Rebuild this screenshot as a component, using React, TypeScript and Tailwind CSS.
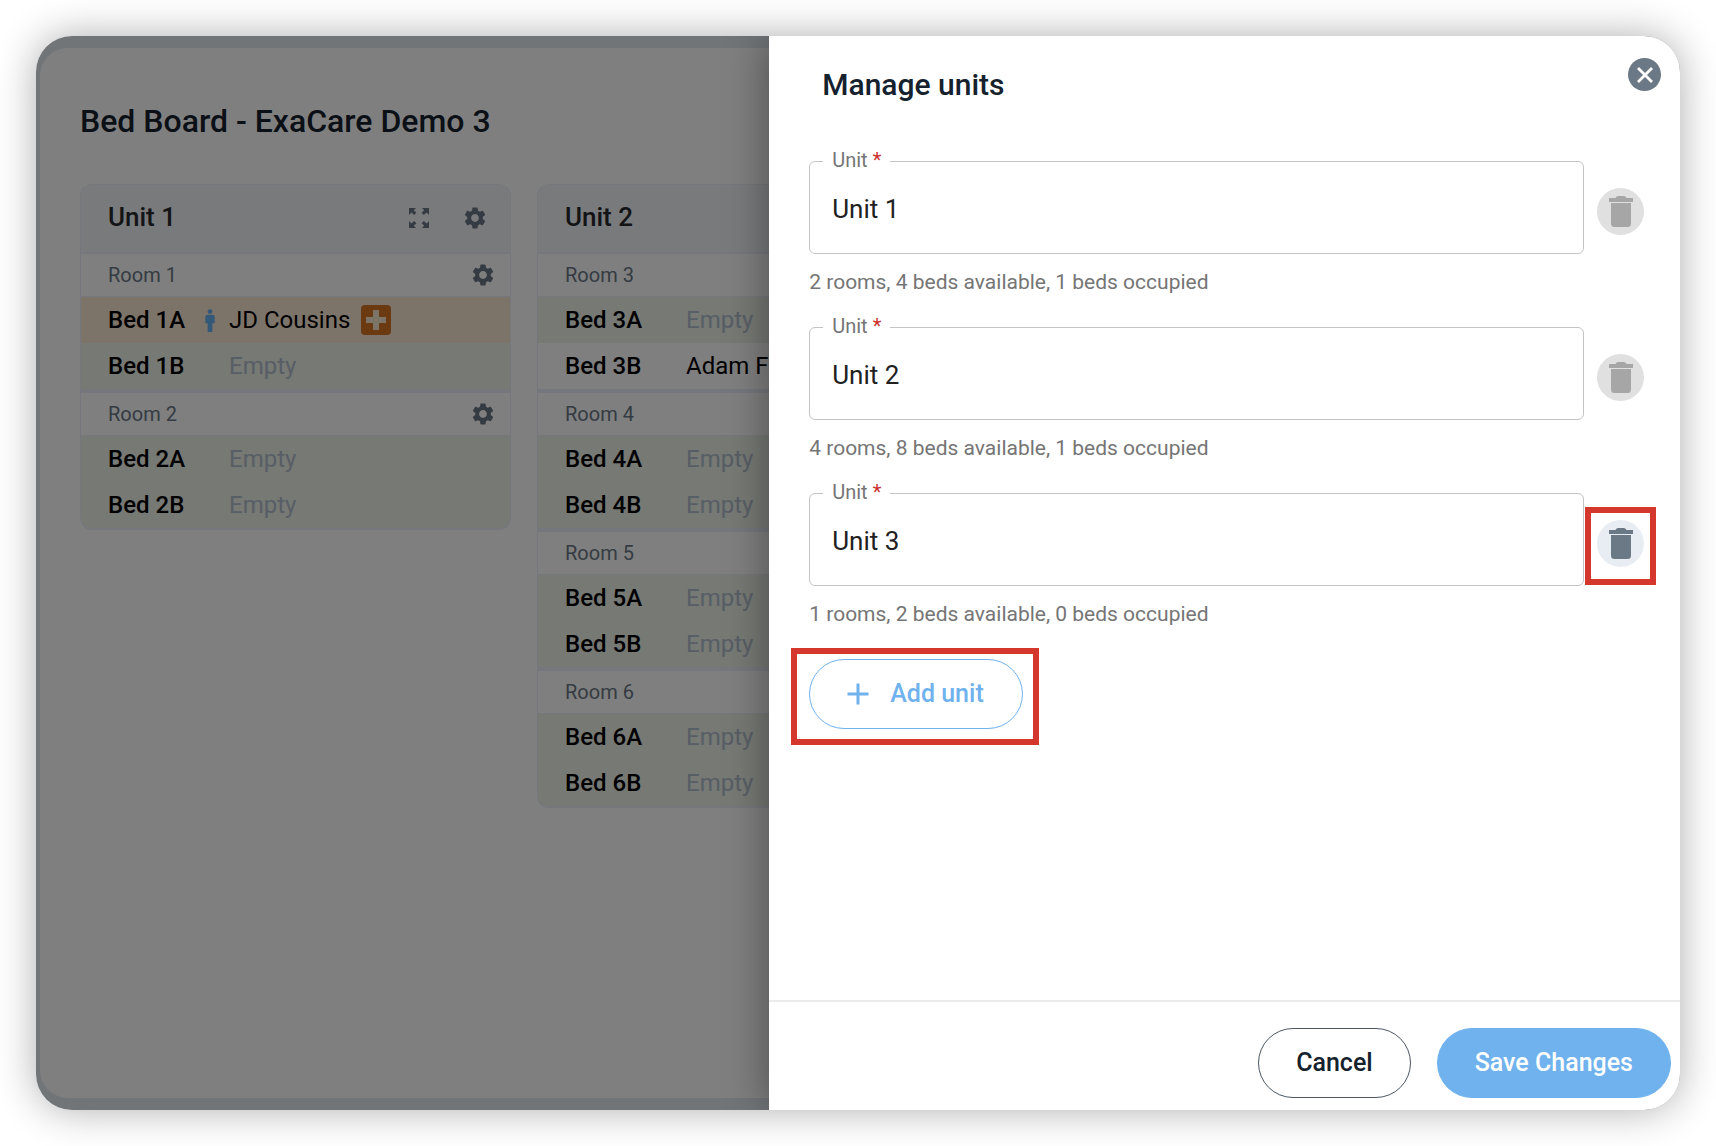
import { useState } from "react";
import { MdAdd, MdSettings } from "react-icons/md";

type Bed = { name: string; resident?: string; hospital?: boolean };
type Room = { name: string; beds: Bed[] };
type Unit = { name: string; rooms: Room[] };

const board: Unit[] = [
  {
    name: "Unit 1",
    rooms: [
      { name: "Room 1", beds: [{ name: "Bed 1A", resident: "JD Cousins", hospital: true }, { name: "Bed 1B" }] },
      { name: "Room 2", beds: [{ name: "Bed 2A" }, { name: "Bed 2B" }] },
    ],
  },
  {
    name: "Unit 2",
    rooms: [
      { name: "Room 3", beds: [{ name: "Bed 3A" }, { name: "Bed 3B", resident: "Adam Fo" }] },
      { name: "Room 4", beds: [{ name: "Bed 4A" }, { name: "Bed 4B" }] },
      { name: "Room 5", beds: [{ name: "Bed 5A" }, { name: "Bed 5B" }] },
      { name: "Room 6", beds: [{ name: "Bed 6A" }, { name: "Bed 6B" }] },
    ],
  },
];

const initialUnits = [
  { id: "unit-1", name: "Unit 1", rooms: 2, available: 4, occupied: 1 },
  { id: "unit-2", name: "Unit 2", rooms: 4, available: 8, occupied: 1 },
  { id: "unit-3", name: "Unit 3", rooms: 1, available: 2, occupied: 0 },
];

function ExpandIcon() {
  return (
    <svg viewBox="0 0 20 20" className="h-5 w-5" fill="currentColor">
      <path d="M0 0h7L4.8 2.2 7.4 4.8 5.2 7 2.4 4.4 0 7z" />
      <path d="M20 0v7l-2.4-2.6L14.8 7l-2.2-2.2 2.6-2.6L13 0z" />
      <path d="M0 20v-7l2.4 2.6L5.2 13l2.2 2.2-2.6 2.6L7 20z" />
      <path d="M20 20h-7l2.2-2.2-2.6-2.6 2.2-2.2 2.8 2.6L20 13z" />
    </svg>
  );
}

function PersonIcon() {
  return (
    <svg viewBox="0 0 10 23" className="h-[23px] w-[10px]" fill="currentColor">
      <circle cx="5" cy="2.6" r="2.4" />
      <path d="M2.5 5.8h5A2.2 2.2 0 0 1 9.7 8v6.2H7.4V23H2.6v-8.8H.3V8a2.2 2.2 0 0 1 2.2-2.2z" />
    </svg>
  );
}

function HospitalBadge() {
  return (
    <svg viewBox="0 0 30 30" className="h-[30px] w-[30px]">
      <rect width="30" height="30" rx="4" fill="#d67422" />
      <path d="M12 5h6v7h7v6h-7v7h-6v-7H5v-6h7z" fill="#fbe9d3" />
    </svg>
  );
}

function TrashIcon() {
  return (
    <svg viewBox="0 0 24 31" className="h-[31px] w-6" fill="currentColor">
      <path d="M0 2h6.5c.6-1.3 1.5-2 2.8-2h5.4c1.3 0 2.2.7 2.8 2H24v4H0z" />
      <path d="M2 7h20v20.5a3.5 3.5 0 0 1-3.5 3.5h-13A3.5 3.5 0 0 1 2 27.5z" />
    </svg>
  );
}

function BedRow({ bed }: { bed: Bed }) {
  const bg = bed.hospital ? "bg-[#fbe9d3]" : bed.resident ? "bg-white" : "bg-[#edf2e9]";

  return (
    <li className={`${bg} flex h-[46px] items-center pl-[27px]`}>
      <span className="w-[97px] text-2xl font-medium text-black">{bed.name}</span>
      <span className="w-6 text-[#66b0f0]">{bed.hospital && <PersonIcon />}</span>
      <span className={`text-2xl ${bed.resident ? "text-black" : "text-[#b0bccb]"}`}>
        {bed.resident ?? "Empty"}
      </span>
      {bed.hospital && (
        <span className="ml-[11px]">
          <HospitalBadge />
        </span>
      )}
    </li>
  );
}

function UnitCard({ unit }: { unit: Unit }) {
  return (
    <section className="w-[431px] shrink-0 overflow-hidden rounded-xl border border-b-2 border-[#eceef9] bg-white">
      <header className="flex h-[69px] items-center border-b-2 border-[#eceef9] bg-[#f2f4f9] pr-[22px] pb-0.5 pl-[27px] text-[#6b7785]">
        <h2 className="flex-1 text-[26px] font-medium text-[#26282c]">{unit.name}</h2>
        <button type="button" aria-label={`Expand ${unit.name}`} className="mr-[33px]">
          <ExpandIcon />
        </button>
        <button type="button" aria-label={`${unit.name} settings`}>
          <MdSettings size={26} />
        </button>
      </header>
      <div className="divide-y-4 divide-[#eceef9]">
        {unit.rooms.map((room) => (
          <div key={room.name}>
            <div className="flex h-[43px] items-center border-b border-[#eceef9] pr-[14px] pl-[27px] text-[#6b7785]">
              <h3 className="flex-1 text-xl">{room.name}</h3>
              <button type="button" aria-label={`${room.name} settings`}>
                <MdSettings size={26} />
              </button>
            </div>
            <ul>
              {room.beds.map((bed) => (
                <BedRow key={bed.name} bed={bed} />
              ))}
            </ul>
          </div>
        ))}
      </div>
    </section>
  );
}

export default function App() {
  const [units, setUnits] = useState(initialUnits);

  const rename = (id: string, name: string) =>
    setUnits(units.map((u) => (u.id === id ? { ...u, name } : u)));

  return (
    <div className="min-h-screen bg-white p-9 font-[Roboto,sans-serif]">
      <div className="relative flex min-h-[calc(100vh-72px)] justify-end overflow-hidden rounded-[36px] shadow-[0_0_40px_rgba(0,0,0,0.32)]">
        {/* Bed board behind the drawer */}
        <main className="absolute inset-0 bg-[#e5eaf0] pt-3 pb-3 pl-1">
          <div className="h-full overflow-hidden rounded-l-[28px] bg-white pt-12 pl-10">
            <h1 className="text-[32px] leading-[50px] font-medium text-[#15212d]">Bed Board - ExaCare Demo 3</h1>
            <div className="mt-[38px] flex items-start gap-[26px]">
              {board.map((unit) => (
                <UnitCard key={unit.name} unit={unit} />
              ))}
            </div>
          </div>
        </main>
        <div className="absolute inset-0 bg-black/50" />

        {/* Manage units drawer */}
        <aside className="relative flex w-[55.4%] flex-col bg-white shadow-[0_0_40px_rgba(0,0,0,0.4)]">
          <header className="flex h-[125px] items-start justify-between pt-[22px] pr-[19px] pl-[53px]">
            <h2 className="pt-1 text-[30px] leading-[46px] font-medium text-[#15212d]">Manage units</h2>
            <button
              type="button"
              aria-label="Close"
              className="flex h-[33px] w-[33px] items-center justify-center rounded-full bg-[#6b7885] text-white"
            >
              <svg viewBox="0 0 16 16" className="h-4 w-4" stroke="currentColor" strokeWidth="2.8">
                <path d="M1 1l14 14M15 1L1 15" />
              </svg>
            </button>
          </header>

          <form className="flex flex-1 flex-col items-start gap-[33px] pr-9 pl-10">
            {units.map((unit) => {
              const removable = unit.occupied === 0;
              return (
                <div key={unit.id} className="w-full">
                  <div className="flex items-center gap-[13px]">
                    <div className="relative h-[93px] flex-1 rounded-md border border-[#c4c4c4]">
                      <label
                        htmlFor={unit.id}
                        className="absolute -top-4 left-[13px] bg-white px-[9px] text-xl leading-7 text-[#757575]"
                      >
                        Unit <span className="text-[#c9302c]">*</span>
                      </label>
                      <input
                        id={unit.id}
                        type="text"
                        value={unit.name}
                        onChange={(e) => rename(unit.id, e.target.value)}
                        className="h-full w-full rounded-md bg-transparent px-[22px] pt-0.5 text-[26px] text-[#212121] outline-none"
                      />
                    </div>
                    <div className="relative mt-[7px]">
                      <button
                        type="button"
                        aria-label={`Delete ${unit.name}`}
                        disabled={!removable}
                        className={`flex h-[47px] w-[47px] items-center justify-center rounded-full ${
                          removable ? "bg-[#e8edf4] text-[#6b7885]" : "bg-[#e0e0e0] text-[#a6a6a6]"
                        }`}
                      >
                        <TrashIcon />
                      </button>
                      {removable && (
                        <div className="pointer-events-none absolute -top-[13px] -right-3 -bottom-[18px] -left-3 border-6 border-[#d4372c]" />
                      )}
                    </div>
                  </div>
                  <p className="mt-4 text-[21px] leading-6 text-[#757575]">
                    {unit.rooms} rooms, {unit.available} beds available, {unit.occupied} beds occupied
                  </p>
                </div>
              );
            })}
            <div className="relative">
              <button
                type="button"
                className="flex h-[70px] items-center gap-[14px] rounded-full border border-[#6fb2ee] pr-[38px] pl-[30px] text-[25px] font-medium text-[#6fb2ee]"
              >
                <MdAdd size={36} />
                Add unit
              </button>
              <div className="pointer-events-none absolute -top-[11px] -right-4 -bottom-4 -left-[18px] border-6 border-[#d4372c]" />
            </div>
          </form>

          <footer className="flex justify-end gap-[26px] border-t-2 border-[#ebebeb] pt-[26px] pr-[9px] pb-3">
            <button
              type="button"
              className="h-[70px] rounded-full border border-[#4b5661] px-[37px] text-[25px] font-medium text-[#15212d]"
            >
              Cancel
            </button>
            <button
              type="button"
              className="h-[70px] rounded-full border border-[#6fb2ee] bg-[#6fb2ee] px-[37px] text-[25px] font-medium text-white"
            >
              Save Changes
            </button>
          </footer>
        </aside>
      </div>
    </div>
  );
}
